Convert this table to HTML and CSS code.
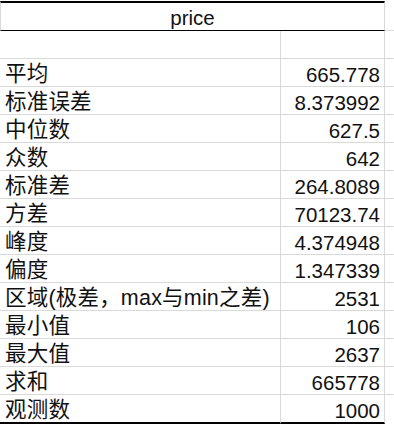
FILE: index.html
```html
<!DOCTYPE html>
<html lang="zh">
<head>
<meta charset="utf-8">
<link rel="stylesheet" href="styles.css">
</head>
<body>
<div class="sheet">
  <div class="row head-row">
    <div class="cell head">price</div>
    <div class="pad"></div>
  </div>
  <div class="row"><div class="cell label"></div><div class="cell value"></div><div class="pad"></div></div>
  <div class="row"><div class="cell label">平均</div><div class="cell value">665.778</div><div class="pad"></div></div>
  <div class="row"><div class="cell label">标准误差</div><div class="cell value">8.373992</div><div class="pad"></div></div>
  <div class="row"><div class="cell label">中位数</div><div class="cell value">627.5</div><div class="pad"></div></div>
  <div class="row"><div class="cell label">众数</div><div class="cell value">642</div><div class="pad"></div></div>
  <div class="row"><div class="cell label">标准差</div><div class="cell value">264.8089</div><div class="pad"></div></div>
  <div class="row"><div class="cell label">方差</div><div class="cell value">70123.74</div><div class="pad"></div></div>
  <div class="row"><div class="cell label">峰度</div><div class="cell value">4.374948</div><div class="pad"></div></div>
  <div class="row"><div class="cell label">偏度</div><div class="cell value">1.347339</div><div class="pad"></div></div>
  <div class="row"><div class="cell label">区域(极差，max与min之差)</div><div class="cell value">2531</div><div class="pad"></div></div>
  <div class="row"><div class="cell label">最小值</div><div class="cell value">106</div><div class="pad"></div></div>
  <div class="row"><div class="cell label">最大值</div><div class="cell value">2637</div><div class="pad"></div></div>
  <div class="row"><div class="cell label">求和</div><div class="cell value">665778</div><div class="pad"></div></div>
  <div class="row last"><div class="cell label">观测数</div><div class="cell value">1000</div><div class="pad"></div></div>
</div>
</body>
</html>
```
FILE: styles.css
```css
html, body {
  margin: 0;
  padding: 0;
  background: #fff;
}
.sheet {
  padding-top: 1px;
  width: 394px;
  font-family: "Liberation Sans", "Noto Sans CJK SC", sans-serif;
  font-size: 20.5px;
  color: #111;
}
.row {
  display: flex;
  height: 28px;
}
.cell {
  box-sizing: border-box;
  height: 28px;
  line-height: 23px;
  padding-top: 4px;
  white-space: nowrap;
  overflow: visible;
  border-bottom: 1px solid #d9d9d9;
  border-right: 1px solid #d9d9d9;
}
.label {
  width: 281px;
  padding-left: 5px;
  font-size: 21.5px;
  letter-spacing: 0.2px;
}
.value {
  width: 104px;
  text-align: right;
  padding-right: 4px;
}
.pad {
  flex: 1;
  box-sizing: border-box;
  height: 28px;
  border-bottom: 1px solid #d9d9d9;
}
.head-row {
  height: 30px;
}
.head-row .pad {
  height: 30px;
  border-top: 2px solid transparent;
}
.head {
  width: 385px;
  height: 30px;
  text-align: center;
  padding-top: 3px;
  line-height: 24px;
  border-top: 2px solid #000;
  border-bottom: 1px solid #000;
  border-left: 1px solid #d9d9d9;
}
.last {
  height: 29px;
}
.last .cell {
  height: 29px;
  border-bottom: 2px solid #000;
}
.last .pad {
  height: 29px;
  border-bottom: none;
}
```
